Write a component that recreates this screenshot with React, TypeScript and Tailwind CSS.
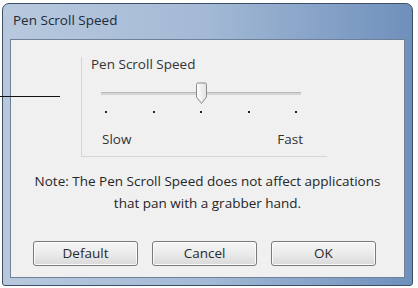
import React from "react";

const font = { fontFamily: '"Open Sans", "Noto Sans", sans-serif' };

function Thumb() {
  return (
    <svg width="13" height="23" viewBox="0 0 13 23" className="block">
      <defs>
        <linearGradient id="thumbFill" x1="0" y1="0" x2="1" y2="0">
          <stop offset="0" stopColor="#fdfdfd" />
          <stop offset="1" stopColor="#e2e2e2" />
        </linearGradient>
      </defs>
      <path
        d="M1.5 2.5 Q1.5 1 3 1 H10 Q11.5 1 11.5 2.5 V15 L6.5 21.5 L1.5 15 Z"
        fill="url(#thumbFill)"
        stroke="#8c8c8c"
        strokeWidth="1"
      />
    </svg>
  );
}

function Button({ label }: { label: string }) {
  return (
    <button className="w-[105px] h-[25px] rounded-[3px] border border-[#7a7a7a] bg-gradient-to-b from-[#f6f6f6] via-[#ebebeb] to-[#d9d9d9] text-[13.5px] font-medium text-[#2a2a2a] shadow-[inset_0_0_0_1px_#fbfbfb]">
      {label}
    </button>
  );
}

export default function App() {
  const ticks = [0, 1, 2, 3, 4];
  return (
    <div className="relative w-[418px] h-[288px] bg-white overflow-hidden" style={font}>
      {/* dialog window frame */}
      <div className="ml-[2px] mt-[3px] w-[411px] h-[283px] rounded-t-[7px] rounded-b-[3px] border border-[#3d4f66] bg-gradient-to-r from-[#b8c9de] via-[#a3b9d5] to-[#6f90bc] flex flex-col">
        <div className="h-[35px] flex items-center pl-[10px] pb-[2px] text-[13.5px] font-medium text-[#1e2a38]">
          Pen Scroll Speed
        </div>
        <div className="mx-[7px] mb-[7px] flex-1 border border-[#6f8099] bg-[#f0f0f0] flex flex-col">
          {/* group box */}
          <div className="ml-[70px] mt-[17px] w-[246px] h-[100px] border-l border-b border-[#d5d5d5] pl-[9px]">
            <div className="text-[13.5px] font-medium leading-[14px] text-[#333]">Pen Scroll Speed</div>
            <div className="relative w-[200px] ml-[10px] mt-[11px] h-[23px]">
              <div className="absolute left-0 right-0 top-[10px] h-[3px] bg-[#d6d6d6] border-t border-[#b8b8b8]" />
              <div className="absolute left-[94px] top-0">
                <Thumb />
              </div>
            </div>
            <div className="w-[200px] ml-[10px] mt-[6px] flex justify-between px-[4px]">
              {ticks.map((t) => (
                <span key={t} className="block w-[2px] h-[2px] bg-[#222]" />
              ))}
            </div>
            <div className="w-[201px] ml-[11px] mt-[19px] flex justify-between text-[13.5px] font-medium leading-[14px] text-[#333]">
              <span>Slow</span>
              <span>Fast</span>
            </div>
          </div>
          {/* note */}
          <div className="mt-[13px] text-center text-[13.5px] font-medium leading-[22px] text-[#262626]">
            Note: The Pen Scroll Speed does not affect applications
            <br />
            that pan with a grabber hand.
          </div>
          {/* buttons */}
          <div className="mt-[27px] ml-[22px] flex gap-[14px]">
            <Button label="Default" />
            <Button label="Cancel" />
            <Button label="OK" />
          </div>
        </div>
      </div>
      {/* callout line */}
      <div className="absolute left-0 top-[96px] w-[60px] h-[1px] bg-[#111]" />
    </div>
  );
}
